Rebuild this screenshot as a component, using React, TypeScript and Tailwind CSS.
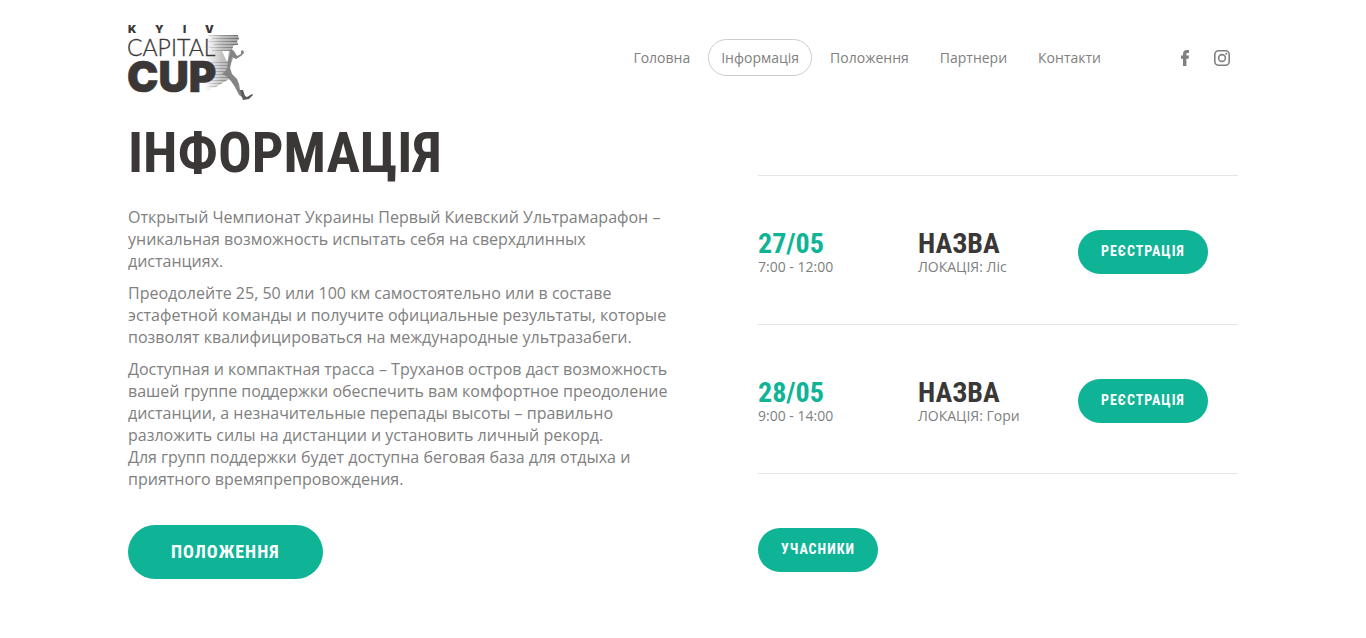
import React from "react";

const navItems = [
  { label: "Головна", href: "#home" },
  { label: "Інформація", href: "#info", active: true },
  { label: "Положення", href: "#rules" },
  { label: "Партнери", href: "#partners" },
  { label: "Контакти", href: "#contacts" },
];

const events = [
  { date: "27/05", time: "7:00 - 12:00", place: "Ліс" },
  { date: "28/05", time: "9:00 - 14:00", place: "Гори" },
];

const condensed =
  "font-['Roboto_Condensed','Liberation_Sans_Narrow','Roboto',sans-serif] font-bold";

function Logo() {
  return (
    <svg viewBox="0 0 126 78" className="block h-[78px] w-[126px] overflow-visible" role="img" aria-label="Kyiv Capital Cup">
      <defs>
        <linearGradient id="streak" gradientUnits="userSpaceOnUse" x1="76" x2="112" y1="0" y2="0">
          <stop offset="0" stopColor="#8a8888" stopOpacity="0" />
          <stop offset="0.5" stopColor="#8a8888" stopOpacity="0.7" />
          <stop offset="1" stopColor="#6b6868" />
        </linearGradient>
        <linearGradient id="band" gradientUnits="userSpaceOnUse" x1="76" x2="112" y1="0" y2="0">
          <stop offset="0" stopColor="#d0cfcf" stopOpacity="0" />
          <stop offset="0.5" stopColor="#c4c3c3" />
          <stop offset="1" stopColor="#a3a1a1" />
        </linearGradient>
      </defs>
      <path
        fill="url(#band)"
        d="M80 11h30l1 4-2 2 1 3-5 2-1 4 2 6-2 5-2 6 1 8-3 5-6 3-6 4-10 2H72l6-30z"
      />
      <path
        fill="url(#streak)"
        d="M80 11h30v1H80zM84 14h27v1H84zM80 17h29v1H80zM86 20h24v1H86zM80 23h25v1H80zM84 26h20v1H84zM80 38h23v1H80zM80 41h22v1H80zM82 44h20v1H82zM80 47h23v1H80zM82 50h21v1H82zM80 53h22v1H80zM80 56h18v1H80zM79 59h15v1H79zM78 62h11v1H78zM76 65h6v1H76z"
      />
      <path fill="#fff" d="M94 27h7l-1.500 10h-1z" />
      <path
        fill="#858383"
        d="M103 25l3 2 3 5 4-2 0-3 2-1 1 3-3 3-5 3-4-2-1 6-1 5 2 6 5 5 2 5 1 6 3 5-1 2-3-2-4-8-4-6-5-5-4-2 5-5 1-8z"
      />
      <path fill="#5d5a5a" d="M112 66l3 0 2 6 2 1 5-3 1 1-4 4-6 1-1-3z" />
      <g fill="#3b3737" fontFamily="Inter, sans-serif">
        <g fontSize="11" fontWeight="900">
          <text x="0" y="9">K</text>
          <text x="27" y="9">Y</text>
          <text x="55" y="9">I</text>
          <text x="77" y="9">V</text>
        </g>
        <text x="-1" y="32" fontFamily="Lato, sans-serif" fontSize="23" fontWeight="300" stroke="#3b3737" strokeWidth="0.3">
          CAPITAL
        </text>
        <text x="-1" y="68" fontSize="42" fontWeight="900" stroke="#3b3737" strokeWidth="0.6">
          CUP
        </text>
      </g>
    </svg>
  );
}

function PillLink({ href, large, children }: { href: string; large?: boolean; children: React.ReactNode }) {
  const size = large ? "h-[54px] px-[43px] text-lg" : "h-11 px-[23px] pb-0.5 text-sm";
  return (
    <a
      href={href}
      className={`inline-flex items-center justify-center rounded-full bg-[#0fb497] tracking-[1px] text-white uppercase hover:bg-[#0da088] ${condensed} ${size}`}
    >
      {children}
    </a>
  );
}

export default function App() {
  return (
    <div className="min-h-screen bg-white px-6 pb-14 font-['Open_Sans',sans-serif] text-[#808080] lg:px-32">
      <header className="flex items-start justify-between pt-6">
        <a href="#home">
          <Logo />
        </a>
        <div className="flex items-center pt-[15px] pr-2">
          <nav className="flex gap-[5px] text-sm" aria-label="Меню">
            {navItems.map((item) => (
              <a
                key={item.label}
                href={item.href}
                aria-current={item.active ? "page" : undefined}
                className={`flex h-[37px] items-center rounded-full border px-3 ${item.active ? "border-[#cccccc]" : "border-transparent"}`}
              >
                {item.label}
              </a>
            ))}
          </nav>
          <div className="ml-[63px] flex gap-[21px]">
            <a href="#facebook" aria-label="Facebook">
              <svg viewBox="0 0 16 16" className="size-4" fill="#808080">
                <path d="M6 16V8.700H4V5.600h2V4c0-2.700 1.300-4 3.900-4H12v3h-1.400C9.700 3 9.400 3.400 9.400 4.200v1.400H12l-.4 3.100H9.400V16z" />
              </svg>
            </a>
            <a href="#instagram" aria-label="Instagram">
              <svg viewBox="0 0 16 16" className="size-4" fill="none" stroke="#808080" strokeWidth="1.600">
                <rect x="0.800" y="0.800" width="14.400" height="14.400" rx="3.800" />
                <circle cx="8" cy="8" r="3.400" />
                <circle cx="12.300" cy="3.700" r="1" fill="#808080" stroke="none" />
              </svg>
            </a>
          </div>
        </div>
      </header>

      <main className="grid gap-x-[90px] gap-y-10 md:grid-cols-[9fr_8fr]">
        <section>
          <h1 className={`pt-[18px] text-[56px] leading-[66px] text-[#3b3737] uppercase ${condensed}`}>Інформація</h1>
          <div className="mt-5 flex flex-col gap-[10px] text-base leading-[22px]">
            <p>
              Открытый Чемпионат Украины Первый Киевский Ультрамарафон – уникальная возможность испытать себя на
              сверхдлинных дистанциях.
            </p>
            <p>
              Преодолейте 25, 50 или 100 км самостоятельно или в составе эстафетной команды и получите официальные
              результаты, которые позволят квалифицироваться на международные ультразабеги.
            </p>
            <p>
              Доступная и компактная трасса – Труханов остров даст возможность вашей группе поддержки обеспечить вам
              комфортное преодоление дистанции, а незначительные перепады высоты – правильно разложить силы на
              дистанции и установить личный рекорд.
              <br />
              Для групп поддержки будет доступна беговая база для отдыха и приятного времяпрепровождения.
            </p>
          </div>
          <div className="mt-[35px] flex">
            <PillLink href="#rules" large>
              Положення
            </PillLink>
          </div>
        </section>

        <section className="pt-[73px]">
          <ul className="border-t border-[#e5e5e5]">
            {events.map((event) => (
              <li key={event.date} className="grid grid-cols-3 items-start border-b border-[#e5e5e5] pt-[54px] pb-12">
                <div>
                  <h2 className={`text-[28px] leading-7 text-[#0fb497] ${condensed}`}>{event.date}</h2>
                  <p className="text-sm leading-[18px]">{event.time}</p>
                </div>
                <div>
                  <h2 className={`text-[28px] leading-7 text-[#3b3737] ${condensed}`}>НАЗВА</h2>
                  <p className="text-sm leading-[18px]">ЛОКАЦІЯ: {event.place}</p>
                </div>
                <div className="flex">
                  <PillLink href="#register">Реєстрація</PillLink>
                </div>
              </li>
            ))}
          </ul>
          <div className="mt-[54px] flex">
            <PillLink href="#members">Учасники</PillLink>
          </div>
        </section>
      </main>
    </div>
  );
}
